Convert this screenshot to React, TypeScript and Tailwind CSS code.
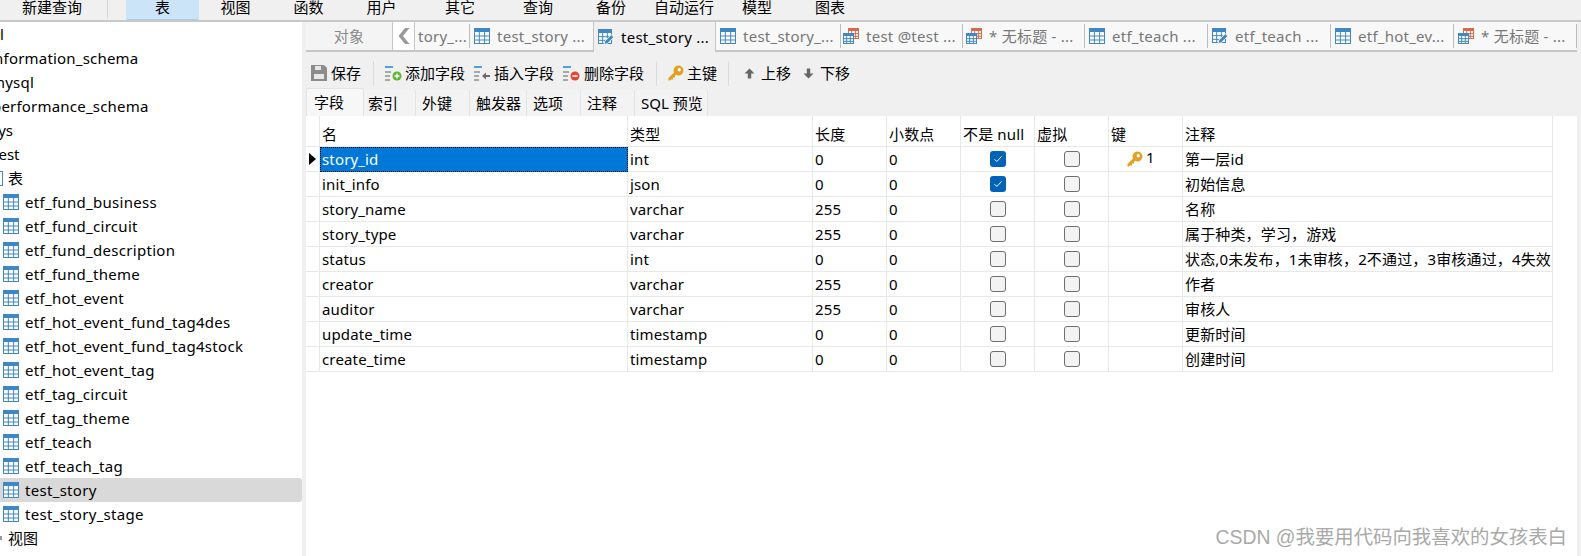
const FONT = '"Noto Sans", "Noto Sans CJK SC", sans-serif';

const menus = [
  { label: '表', w: 'w-[73px]', active: true },
  { label: '视图', w: 'w-[73px]' },
  { label: '函数', w: 'w-[73px]' },
  { label: '用户', w: 'w-[73px]' },
  { label: '其它', w: 'w-[84px]' },
  { label: '查询', w: 'w-[72px]' },
  { label: '备份', w: 'w-[74px]' },
  { label: '自动运行', w: 'w-[72px]' },
  { label: '模型', w: 'w-[74px]' },
  { label: '图表', w: 'w-[72px]' },
];

const treeTables = [
  'etf_fund_business',
  'etf_fund_circuit',
  'etf_fund_description',
  'etf_fund_theme',
  'etf_hot_event',
  'etf_hot_event_fund_tag4des',
  'etf_hot_event_fund_tag4stock',
  'etf_hot_event_tag',
  'etf_tag_circuit',
  'etf_tag_theme',
  'etf_teach',
  'etf_teach_tag',
  'test_story',
  'test_story_stage',
];

const tabs: { label: string; icon: 'table' | 'edit' | 'query'; active?: boolean }[] = [
  { label: 'test_story ...', icon: 'table' },
  { label: 'test_story ...', icon: 'edit', active: true },
  { label: 'test_story_...', icon: 'table' },
  { label: 'test @test ...', icon: 'query' },
  { label: '* 无标题 - ...', icon: 'query' },
  { label: 'etf_teach ...', icon: 'table' },
  { label: 'etf_teach ...', icon: 'edit' },
  { label: 'etf_hot_ev...', icon: 'table' },
  { label: '* 无标题 - ...', icon: 'query' },
];

const subTabs = [
  { label: '字段', w: 'w-[58px] pl-[7px]', active: true },
  { label: '索引', w: 'w-[52px] pl-1' },
  { label: '外键', w: 'w-[54px] pl-[6px]' },
  { label: '触发器', w: 'w-[57px] pl-[6px]' },
  { label: '选项', w: 'w-[54px] pl-[6px]' },
  { label: '注释', w: 'w-[54px] pl-[6px]' },
  { label: 'SQL 预览', w: 'w-[73px] pl-[6px]' },
];

const rows = [
  { name: 'story_id', type: 'int', len: '0', notNull: true, key: true, comment: '第一层id' },
  { name: 'init_info', type: 'json', len: '0', notNull: true, comment: '初始信息' },
  { name: 'story_name', type: 'varchar', len: '255', comment: '名称' },
  { name: 'story_type', type: 'varchar', len: '255', comment: '属于种类，学习，游戏' },
  { name: 'status', type: 'int', len: '0', comment: '状态,0未发布，1未审核，2不通过，3审核通过，4失效' },
  { name: 'creator', type: 'varchar', len: '255', comment: '作者' },
  { name: 'auditor', type: 'varchar', len: '255', comment: '审核人' },
  { name: 'update_time', type: 'timestamp', len: '0', comment: '更新时间' },
  { name: 'create_time', type: 'timestamp', len: '0', comment: '创建时间' },
];

const gridCols = 'grid grid-cols-[14px_308px_185px_74px_74px_74px_74px_74px_370px]';

function TableGlyph({ x = 0, y = 0, w = 16, h = 16, color = '#3f87c5' }: { x?: number; y?: number; w?: number; h?: number; color?: string }) {
  const c1 = x + w / 3;
  const c2 = x + (2 * w) / 3;
  const head = Math.round(h * 0.28);
  const r1 = y + head + (h - head) / 3;
  const r2 = y + head + (2 * (h - head)) / 3;
  return (
    <g>
      <rect x={x} y={y} width={w} height={h} fill="#fff" />
      <rect x={x} y={y} width={w} height={head} fill={color} />
      <rect x={x + 0.5} y={y + 0.5} width={w - 1} height={h - 1} fill="none" stroke={color} />
      <path d={`M${c1} ${y + head}V${y + h}M${c2} ${y + head}V${y + h}M${x} ${r1}H${x + w}M${x} ${r2}H${x + w}`} stroke={color} fill="none" />
    </g>
  );
}

function TabIcon({ kind }: { kind: 'table' | 'edit' | 'query' }) {
  return (
    <svg width="17" height="17" viewBox="0 0 17 17" className="shrink-0">
      {kind === 'table' && <TableGlyph />}
      {kind === 'edit' && (
        <g>
          <TableGlyph w={14} h={15} />
          <path d="M6 15.500l.8-3.200 6.500-6.500 2.500 2.400-6.600 6.500z" fill="#3f87c5" stroke="#fff" strokeWidth="0.8" />
        </g>
      )}
      {kind === 'query' && (
        <g>
          <TableGlyph x={5} y={0} w={11} h={11} color="#d9694a" />
          <TableGlyph x={0} y={5} w={11} h={11} />
        </g>
      )}
    </svg>
  );
}

function KeyIcon() {
  return (
    <svg width="16" height="16" viewBox="0 0 16 16" className="shrink-0">
      <path d="M10.500 0.500a5 5 0 1 1-2.600 9.300L7 10.700V12.500H5V14.500H3L1.800 15.600H0.500V13L6 7.500a5 5 0 0 1 4.500-7z" fill="#e3a021" />
      <circle cx="11.300" cy="4.700" r="1.700" fill="#fff" />
    </svg>
  );
}

function FieldIcon({ badge }: { badge: 'add' | 'insert' | 'delete' }) {
  return (
    <svg width="17" height="16" viewBox="0 0 17 16" className="shrink-0">
      <rect x="0" y="1" width="8" height="2" fill="#4ba3e3" />
      <rect x="0" y="6" width="6" height="2" fill="#a8a8a8" />
      <rect x="0" y="10" width="5" height="2" fill="#a8a8a8" />
      <rect x="0" y="14" width="5" height="2" fill="#a8a8a8" />
      {badge === 'add' && (
        <g>
          <circle cx="12" cy="11" r="4.500" fill="#5cb531" />
          <path d="M12 8.500v5M9.500 11h5" stroke="#fff" strokeWidth="1.400" />
        </g>
      )}
      {badge === 'insert' && <path d="M8 11l4-3.600V10h4v2h-4v2.600z" fill="#6a6a6a" />}
      {badge === 'delete' && (
        <g>
          <circle cx="12" cy="11" r="4.500" fill="#e2492f" />
          <path d="M9.500 11h5" stroke="#fff" strokeWidth="1.600" />
        </g>
      )}
    </svg>
  );
}

function ArrowIcon({ down }: { down?: boolean }) {
  return (
    <svg width="11" height="11" viewBox="0 0 11 11" className="shrink-0">
      <path d={down ? 'M5.500 10.500L.5 5.500h3.300V.5h3.400v5h3.300z' : 'M5.500 .5l5 5H7.200v5H3.800v-5H.5z'} fill="#666" />
    </svg>
  );
}

function Checkbox({ checked }: { checked?: boolean }) {
  return (
    <span
      className={
        checked
          ? 'flex h-4 w-4 items-center justify-center rounded-[3px] bg-[#0063b8]'
          : 'block h-4 w-4 rounded-[3px] border border-[#6f6f6f] bg-[#f3f3f3]'
      }
    >
      {checked && (
        <svg width="10" height="10" viewBox="0 0 10 10">
          <path d="M1.500 5.200l2.300 2.300L8.500 2.500" fill="none" stroke="#fff" strokeWidth="1" />
        </svg>
      )}
    </span>
  );
}

function Sep() {
  return <span className="h-[25px] w-px shrink-0 bg-[#dcdcdc]" />;
}

function Sidebar() {
  return (
    <aside className="h-full w-[302px] shrink-0 overflow-hidden bg-white text-[15px] text-black">
      <div className="flex h-6 items-center"><span className="ml-[-14px]">etl</span></div>
      <div className="flex h-6 items-center tracking-[0.2px]"><span className="ml-[-10px]">information_schema</span></div>
      <div className="flex h-6 items-center tracking-[0.2px]"><span className="ml-[-9px]">mysql</span></div>
      <div className="flex h-6 items-center tracking-[0.2px]"><span className="ml-[-8px]">performance_schema</span></div>
      <div className="flex h-6 items-center"><span className="ml-[-9px]">sys</span></div>
      <div className="flex h-6 items-center"><span className="ml-[-7px]">test</span></div>
      <div className="flex h-6 items-center gap-[5px]">
        <span className="h-[15px] w-[3px] border-y border-r border-[#3f87c5]" />
        <span>表</span>
      </div>
      {treeTables.map((t) => (
        <div
          key={t}
          className={`flex h-6 items-center gap-[5px] rounded-r-[3px] pl-[3px] tracking-[0.3px] ${t === 'test_story' ? 'bg-[#d9d9d9]' : ''}`}
        >
          <TabIcon kind="table" />
          <span>{t}</span>
        </div>
      ))}
      <div className="flex h-6 items-center gap-[6px]">
        <span className="h-[4px] w-[2px] bg-[#999]" />
        <span>视图</span>
      </div>
    </aside>
  );
}

function TabBar() {
  return (
    <div className="flex h-[30px] shrink-0 border-b-2 border-[#c6c6c6] bg-[#f8f8f8] text-[15px] tracking-[0.25px] text-[#777]">
      <div className="flex w-[87px] items-center justify-center border-r border-[#c6c6c6] bg-[#f4f4f4] text-[#8a8a8a]">对象</div>
      <div className="flex w-[22px] items-center justify-center border-r border-[#c6c6c6] bg-white">
        <svg width="12" height="16" viewBox="0 0 12 16">
          <path d="M7 0L0.500 8 7 16h4.500L5 8l6.500-8z" fill="#9a9a9a" />
        </svg>
      </div>
      <div className="flex w-[55px] items-center overflow-hidden pl-[3px]">
        <span className="whitespace-nowrap">tory_...</span>
        <span className="ml-auto h-[24px] w-px shrink-0 bg-[#bdbdbd]" />
      </div>
      {tabs.map((tab, i) => (
        <div
          key={i}
          className={
            tab.active
              ? 'mb-[-2px] flex w-[123px] items-center gap-[6px] border-x border-[#c6c6c6] bg-[#f0f0f0] pl-1 text-black'
              : 'flex w-[123px] items-center gap-[6px] pl-1'
          }
        >
          <TabIcon kind={tab.icon} />
          <span className="whitespace-nowrap">{tab.label}</span>
          {!tab.active && i !== 0 && <span className="ml-auto h-[24px] w-px shrink-0 bg-[#bdbdbd]" />}
        </div>
      ))}
    </div>
  );
}

function Toolbar() {
  return (
    <div className="flex h-[36px] shrink-0 items-center pl-[5px] pt-[6px] text-[15px] text-black">
      <svg width="16" height="16" viewBox="0 0 16 16" className="mr-1 shrink-0">
        <path d="M0 0h13l3 3v13H0z" fill="#8c8c8c" />
        <rect x="4" y="1" width="6" height="4" fill="#e8e8e8" />
        <rect x="3" y="9" width="10" height="5" fill="#e8e8e8" />
      </svg>
      <span className="mr-3">保存</span>
      <Sep />
      <span className="ml-[11px] mr-[3px]"><FieldIcon badge="add" /></span>
      <span className="mr-[9px]">添加字段</span>
      <span className="mr-[3px]"><FieldIcon badge="insert" /></span>
      <span className="mr-[9px]">插入字段</span>
      <span className="mr-1"><FieldIcon badge="delete" /></span>
      <span className="mr-3">删除字段</span>
      <Sep />
      <span className="ml-[11px] mr-[3px]"><KeyIcon /></span>
      <span className="mr-[11px]">主键</span>
      <Sep />
      <span className="ml-[15px] mr-[6px]"><ArrowIcon /></span>
      <span className="mr-3">上移</span>
      <span className="mr-[6px]"><ArrowIcon down /></span>
      <span>下移</span>
    </div>
  );
}

function SubTabs() {
  return (
    <div className="flex h-[28px] shrink-0 text-[15px] text-black">
      {subTabs.map((s) => (
        <div
          key={s.label}
          className={
            s.active
              ? `${s.w} flex items-start rounded-t-[2px] border-x border-t border-[#e4e4e4] bg-[#f7f7f7] pt-[2px]`
              : `${s.w} mt-[2px] flex items-center border-r border-[#e4e4e4] bg-[#f3f3f3]`
          }
        >
          {s.label}
        </div>
      ))}
    </div>
  );
}

function FieldGrid() {
  const cell = 'flex items-center border-r border-b border-[#e8e8e8] px-[2px] whitespace-nowrap overflow-hidden tracking-[0.15px]';
  return (
    <div className="flex-1 bg-white text-[15px] text-black">
      <div className={`${gridCols} h-[31px]`}>
        <div className="border-r border-b border-[#e8e8e8]" />
        {['名', '类型', '长度', '小数点', '不是 null', '虚拟', '键', '注释'].map((h) => (
          <div key={h} className={`${cell} pt-[6px]`}>{h}</div>
        ))}
      </div>
      {rows.map((r, i) => (
        <div key={r.name} className={`${gridCols} h-[25px]`}>
          <div className="flex items-center justify-center border-r border-b border-[#e8e8e8]">
            {i === 0 && (
              <svg width="7" height="12" viewBox="0 0 7 12">
                <path d="M0 0l7 6-7 6z" fill="#000" />
              </svg>
            )}
          </div>
          <div className={i === 0 ? 'flex items-center border border-dotted border-black bg-[#0078d7] px-px tracking-[0.15px] text-white' : cell}>{r.name}</div>
          <div className={cell}>{r.type}</div>
          <div className={cell}>{r.len}</div>
          <div className={cell}>0</div>
          <div className={`${cell} justify-center`}><Checkbox checked={r.notNull} /></div>
          <div className={`${cell} justify-center`}><Checkbox /></div>
          <div className={`${cell} gap-[3px] pl-[18px]`}>
            {r.key && <KeyIcon />}
            {r.key && <span className="mt-[-3px]">1</span>}
          </div>
          <div className={cell}>{r.comment}</div>
        </div>
      ))}
    </div>
  );
}

export default function App() {
  return (
    <div className="relative flex h-[556px] w-[1581px] flex-col overflow-hidden bg-white" style={{ fontFamily: FONT }}>
      <header className="flex h-[22px] shrink-0 overflow-hidden border-b-2 border-[#c9c9c9] bg-[#f0f0f0] text-[15px] text-black">
        <div className="mb-[2px] flex w-[108px] justify-center border-r border-[#d8d8d8] pr-[3px] leading-[15px]">新建查询</div>
        <div className="w-[18px]" />
        {menus.map((m) => (
          <div
            key={m.label}
            className={`${m.w} flex justify-center leading-[15px] ${m.active ? 'rounded-b-[2px] border-b border-[#a9cfee] bg-[#cce4f7]' : ''}`}
          >
            {m.label}
          </div>
        ))}
      </header>
      <div className="flex min-h-0 flex-1">
        <Sidebar />
        <div className="w-1 shrink-0 bg-[#f0f0f0]" />
        <main className="flex min-w-0 flex-1 flex-col bg-[#f0f0f0]">
          <TabBar />
          <Toolbar />
          <SubTabs />
          <FieldGrid />
        </main>
        <div className="w-1 shrink-0 bg-[#f0f0f0]" />
      </div>
      <div className="absolute bottom-[8px] right-[14px] text-[19.4px] leading-[22px] text-[#a9a9a9]" style={{ fontFamily: '"Liberation Sans", "Noto Sans CJK SC", sans-serif' }}>
        CSDN @我要用代码向我喜欢的女孩表白
      </div>
    </div>
  );
}
